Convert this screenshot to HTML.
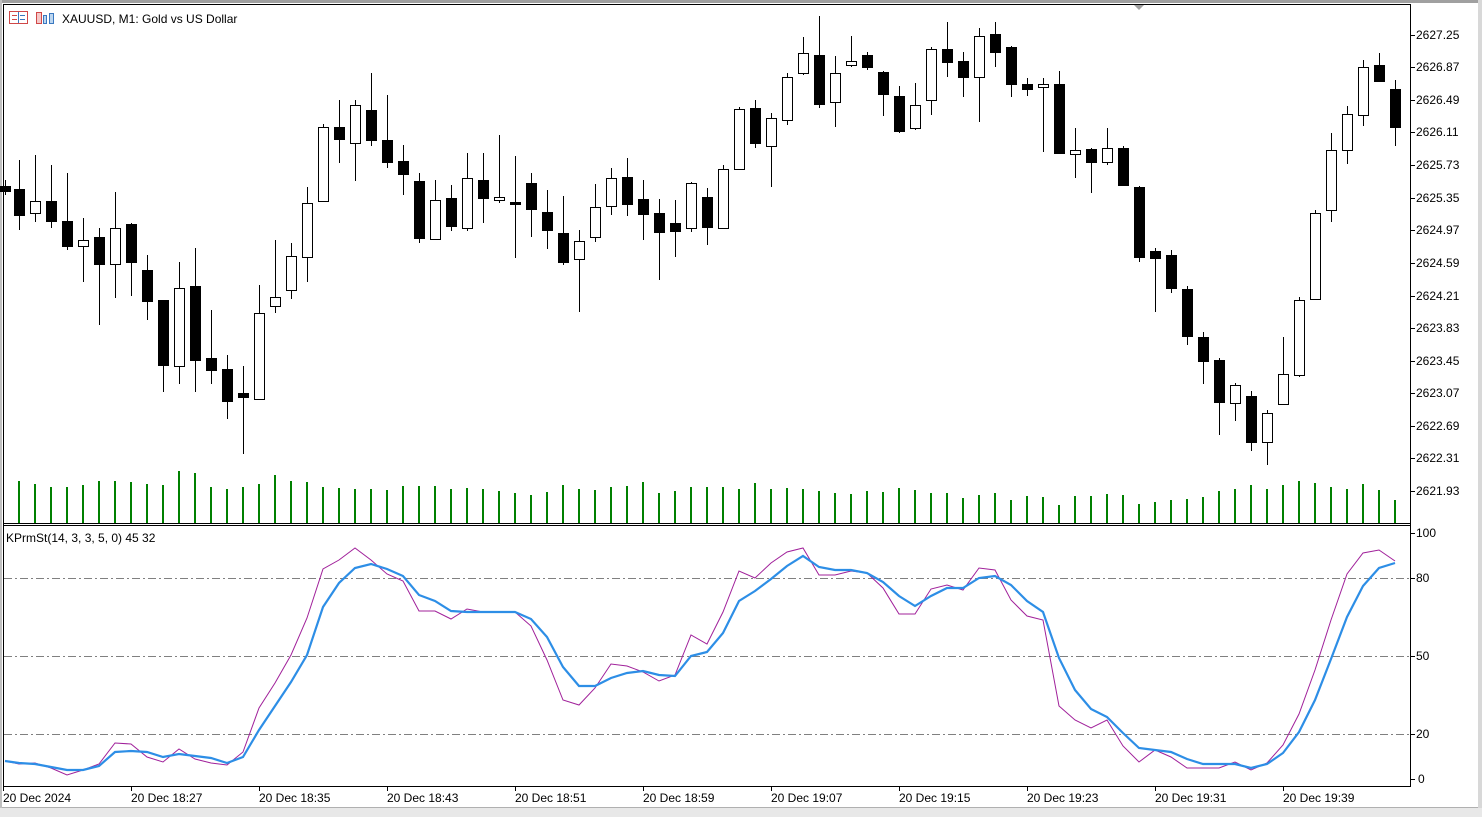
<!DOCTYPE html>
<html><head><meta charset="utf-8"><style>
html,body{margin:0;padding:0;background:#fff;width:1482px;height:817px;overflow:hidden}
svg{display:block;font-family:"Liberation Sans",Arial,sans-serif;font-size:12px}
</style></head><body>
<svg id="s" width="1482" height="817" xmlns="http://www.w3.org/2000/svg">
<rect x="0" y="0" width="1482" height="817" fill="#fff"/>
<rect x="0" y="0" width="1482" height="3" fill="#a0a0a0"/>
<rect x="0" y="808" width="1482" height="9" fill="#e8e8e8"/>
<rect x="0" y="807" width="1482" height="1" fill="#b0b0b0"/>
<rect x="1478" y="0" width="4" height="808" fill="#d8d8d8"/>
<rect x="0" y="0" width="2" height="808" fill="#c0c0c0"/>
<line x1="3.5" y1="4.5" x2="1410.5" y2="4.5" stroke="#000"/>
<line x1="3.5" y1="4" x2="3.5" y2="787" stroke="#000"/>
<line x1="1410.5" y1="4" x2="1410.5" y2="787" stroke="#000"/>
<line x1="3" y1="786.5" x2="1411" y2="786.5" stroke="#000"/>
<line x1="3" y1="523.5" x2="1411" y2="523.5" stroke="#000"/>
<line x1="3" y1="525.5" x2="1411" y2="525.5" stroke="#000"/>
<polygon points="1134,5 1144,5 1139,10" fill="#a0a0a0"/>
<g id="g"></g>
<!-- header icons -->
<rect x="9.5" y="11.5" width="18" height="12" fill="#fff" stroke="#d04848"/>
<line x1="12" y1="15.5" x2="17" y2="15.5" stroke="#d04848"/><line x1="12" y1="19.5" x2="17" y2="19.5" stroke="#d04848"/>
<line x1="20" y1="15.5" x2="25" y2="15.5" stroke="#3a78c0"/><line x1="20" y1="19.5" x2="25" y2="19.5" stroke="#3a78c0"/>
<line x1="18.5" y1="12" x2="18.5" y2="23" stroke="#3a78c0"/>
<path d="M36.5 12.5h5v11h-5z" fill="#f5c8c8" stroke="#d04848"/>
<path d="M43.5 15.5h3v8h-3zM49.5 13.5h4v10h-4z" fill="#bcd6f0" stroke="#3a78c0"/>
<text x="62" y="23" fill="#000">XAUUSD, M1:  Gold vs US Dollar</text>
<text x="6" y="542" fill="#000">KPrmSt(14, 3, 3, 5, 0) 45 32</text>
</svg>
<script>
const g=document.getElementById('g');let h='';
const C=[[5,180,186,191,195,'b'],[19,160,189,215,230,'b'],[35,155,201,213,222,'w'],[51,165,201,221,228,'b'],[67,173,221,246,250,'b'],[83,218,240,246,282,'w'],[99,228,237,264,325,'b'],[115,192,228,264,298,'w'],[131,223,224,262,296,'b'],[147,255,270,301,320,'b'],[163,300,300,365,392,'b'],[179,262,288,366,384,'w'],[195,248,286,360,392,'b'],[211,310,358,370,384,'b'],[227,355,369,401,419,'b'],[243,366,393,397,454,'b'],[259,285,313,399,399,'w'],[275,240,297,306,313,'w'],[291,243,256,290,299,'w'],[307,187,203,257,282,'w'],[323,124,127,201,201,'w'],[339,100,127,139,163,'b'],[355,100,105,143,181,'w'],[371,73,110,140,146,'b'],[387,95,140,162,168,'b'],[403,145,161,174,195,'b'],[419,173,181,238,243,'b'],[435,180,200,239,240,'w'],[451,185,198,226,231,'b'],[467,153,178,228,231,'w'],[483,153,180,198,223,'b'],[499,135,197,200,203,'w'],[515,156,202,204,258,'b'],[531,173,183,209,237,'b'],[547,190,212,230,249,'b'],[563,196,233,262,265,'b'],[579,230,241,259,312,'w'],[595,184,207,237,242,'w'],[611,168,178,206,215,'w'],[627,158,177,204,216,'b'],[643,180,199,214,240,'b'],[659,199,213,232,280,'b'],[675,200,223,231,257,'b'],[691,182,183,228,232,'w'],[707,188,197,227,245,'b'],[723,165,169,228,228,'w'],[739,107,109,169,169,'w'],[755,100,108,143,148,'b'],[771,113,118,146,187,'w'],[787,73,77,120,125,'w'],[803,37,53,73,75,'w'],[819,16,55,104,108,'b'],[835,56,73,102,127,'w'],[851,36,61,65,67,'w'],[867,52,55,67,70,'b'],[883,71,72,94,116,'b'],[899,86,96,131,133,'b'],[915,83,105,128,130,'w'],[931,47,49,100,115,'w'],[947,22,49,62,77,'b'],[963,52,61,77,97,'b'],[979,28,36,77,122,'w'],[995,22,34,52,67,'b'],[1011,46,47,84,97,'b'],[1027,78,84,89,96,'b'],[1043,78,84,87,152,'w'],[1059,71,84,153,153,'b'],[1075,128,150,154,178,'w'],[1091,148,149,162,193,'b'],[1107,128,148,162,165,'w'],[1123,146,148,185,186,'b'],[1139,186,187,257,262,'b'],[1155,248,251,258,312,'b'],[1171,250,255,288,293,'b'],[1187,286,289,336,345,'b'],[1203,332,337,361,384,'b'],[1219,358,360,402,435,'b'],[1235,383,385,403,421,'w'],[1251,391,396,442,451,'b'],[1267,410,413,442,465,'w'],[1283,337,374,404,404,'w'],[1299,297,300,375,377,'w'],[1315,210,213,299,299,'w'],[1331,133,150,210,222,'w'],[1347,106,114,150,164,'w'],[1363,60,67,115,126,'w'],[1379,53,65,81,82,'b'],[1395,80,89,127,146,'b']];
// volumes
const V=[481,484,487,487,485,481,481,482,484,485,471,473,487,489,487,484,475,481,482,487,488,489,489,490,486,486,486,489,488,489,491,493,495,492,485,489,490,487,486,482,493,491,487,487,487,489,483,489,488,489,491,493,494,491,492,488,490,493,493,498,495,493,500,496,497,505,496,496,494,495,504,502,500,499,497,491,489,485,489,485,481,483,487,489,484,490,500];
V.forEach((t,i)=>{const x=19+16*i;h+=`<rect x="${x-1}" y="${t}" width="2" height="${523-t}" fill="#008000"/>`;});
C.forEach(c=>{const[x,hi,t,b,lo,k]=c;const xs=x+0.5;
h+=`<line x1="${xs}" y1="${hi}" x2="${xs}" y2="${lo}" stroke="#000"/>`;
const hh=Math.max(b-t,1);
h+=`<rect x="${x-5+0.5}" y="${t+0.5}" width="10" height="${hh}" fill="${k=='b'?'#000':'#fff'}" stroke="#000"/>`;});
// price axis
const P=[[35,'2627.25'],[67,'2626.87'],[100,'2626.49'],[132,'2626.11'],[165,'2625.73'],[198,'2625.35'],[230,'2624.97'],[263,'2624.59'],[296,'2624.21'],[328,'2623.83'],[361,'2623.45'],[393,'2623.07'],[426,'2622.69'],[458,'2622.31'],[491,'2621.93']];
P.forEach(p=>{h+=`<line x1="1411" y1="${p[0]+.5}" x2="1415" y2="${p[0]+.5}" stroke="#000"/><text x="1416" y="${p[0]+4}">${p[1]}</text>`;});
[[533,'100',533],[578,'80',578],[656,'50',656],[734,'20',734],[779,'0',779]].forEach(p=>{h+=`<line x1="1411" y1="${p[0]+.5}" x2="1415" y2="${p[0]+.5}" stroke="#000"/><text x="${p[1]=='0'?1418:1416}" y="${p[0]+4}">${p[1]}</text>`;});
[578,656,734].forEach(y=>{h+=`<line x1="4" y1="${y+.5}" x2="1410" y2="${y+.5}" stroke="#808080" stroke-dasharray="8,3,2,3"/>`;});
const B=[[5,761],[19,763],[35,764],[51,767],[67,770],[83,770],[99,766],[115,752],[131,751],[147,752],[163,757],[179,754],[195,756],[211,758],[227,763],[243,757],[259,730],[275,706],[291,682],[307,655],[323,607],[339,583],[355,568],[371,564],[387,569],[403,576],[419,595],[435,601],[451,611],[467,612],[483,612],[499,612],[515,612],[531,619],[547,637],[563,667],[579,686],[595,686],[611,678],[627,673],[643,671],[659,675],[675,676],[691,656],[707,652],[723,633],[739,601],[755,591],[771,579],[787,566],[803,556],[819,567],[835,570],[851,570],[867,573],[883,582],[899,596],[915,606],[931,596],[947,588],[963,588],[979,578],[995,576],[1011,585],[1027,601],[1043,612],[1059,658],[1075,690],[1091,709],[1107,717],[1123,733],[1139,748],[1155,750],[1171,752],[1187,759],[1203,764],[1219,764],[1235,764],[1251,768],[1267,764],[1283,753],[1299,732],[1315,700],[1331,659],[1347,617],[1363,586],[1379,568],[1395,563]];
const M=[[5,761],[19,764],[35,763],[51,768],[67,775],[83,770],[99,764],[115,743],[131,744],[147,757],[163,762],[179,749],[195,759],[211,763],[227,765],[243,752],[259,708],[275,683],[291,655],[307,618],[323,569],[339,560],[355,548],[371,560],[387,574],[403,581],[419,611],[435,611],[451,619],[467,609],[483,612],[499,612],[515,612],[531,626],[547,660],[563,700],[579,705],[595,688],[611,664],[627,666],[643,672],[659,681],[675,675],[691,635],[707,644],[723,612],[739,571],[755,578],[771,563],[787,552],[803,548],[819,575],[835,575],[851,571],[867,573],[883,588],[899,614],[915,614],[931,589],[947,585],[963,590],[979,568],[995,570],[1011,600],[1027,616],[1043,620],[1059,706],[1075,720],[1091,728],[1107,720],[1123,746],[1139,762],[1155,750],[1171,757],[1187,768],[1203,768],[1219,768],[1235,762],[1251,770],[1267,763],[1283,745],[1299,714],[1315,670],[1331,620],[1347,574],[1363,553],[1379,550],[1395,561]];
h+=`<polyline points="${M.map(p=>p.join(',')).join(' ')}" fill="none" stroke="#a0209a" stroke-width="1"/>`;
h+=`<polyline points="${B.map(p=>p.join(',')).join(' ')}" fill="none" stroke="#2d8ee6" stroke-width="2.2"/>`;
const T=['20 Dec 2024','20 Dec 18:27','20 Dec 18:35','20 Dec 18:43','20 Dec 18:51','20 Dec 18:59','20 Dec 19:07','20 Dec 19:15','20 Dec 19:23','20 Dec 19:31','20 Dec 19:39'];
T.forEach((t,i)=>{const x=3+128*i;h+=`<line x1="${x+.5}" y1="787" x2="${x+.5}" y2="791" stroke="#000"/><text x="${x}" y="802">${t}</text>`;});
g.innerHTML=h;
</script>
</body></html>
